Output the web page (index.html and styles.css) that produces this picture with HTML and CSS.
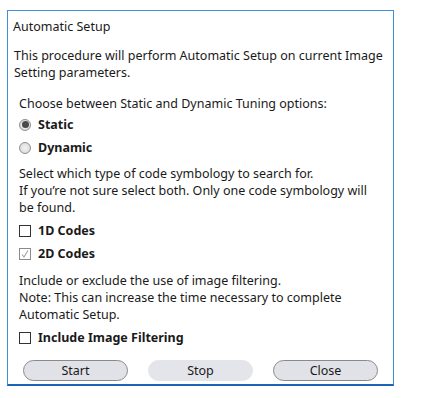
FILE: index.html
```html
<!DOCTYPE html>
<html lang="en">

<head>
    <meta charset="UTF-8">
    <title>Automatic Setup</title>
    <link rel="stylesheet" href="styles.css">
</head>

<body>

    <div class="dialog">

        <div class="title">Automatic Setup</div>

        <p class="intro">This procedure will perform Automatic Setup on current Image Setting parameters.</p>

        <div class="group">
            <p>Choose between Static and Dynamic Tuning options:</p>
            <label class="option"><span class="radio checked"></span>Static</label>
            <label class="option"><span class="radio"></span>Dynamic</label>
        </div>

        <div class="group codes">
            <p>Select which type of code symbology to search for.<br>If you’re not sure select both. Only one code symbology will be found.</p>
            <label class="option"><span class="check"></span>1D Codes</label>
            <label class="option"><span class="check checked">
                <svg width="10" height="10" viewBox="0 0 10 10"><path d="M2 5.5 L4 8 L8 1.5" fill="none" stroke="#a5a5a5" stroke-width="1.1"/></svg>
            </span>2D Codes</label>
        </div>

        <div class="group filter">
            <p>Include or exclude the use of image filtering.<br>Note: This can increase the time necessary to complete Automatic Setup.</p>
            <label class="option"><span class="check"></span>Include Image Filtering</label>
        </div>

        <div class="buttons">
            <button class="btn">Start</button>
            <button class="btn disabled">Stop</button>
            <button class="btn">Close</button>
        </div>

    </div>

</body>

</html>
```

FILE: styles.css
```css
body {
    margin: 0;
    background: white;
    font-family: "Noto Sans", "Open Sans", sans-serif;
    font-size: 12.5px;
    color: #1a1a1a;
}

p {
    margin: 0;
}

.dialog {
    box-sizing: border-box;
    width: 387px;
    height: 376px;
    margin: 10px 0 0 7px;
    padding: 7px 2px 0 5px;
    border: 1px solid #3f8fdb;
    border-bottom: 2px solid #1c64b4;
    line-height: 17px;
}

.title {
    margin-bottom: 13px;
}

.intro {
    padding-left: 1px;
    margin-top: -1px;
    margin-bottom: 14px;
}

.group {
    padding-left: 6px;
    margin-bottom: 6px;
}

.group p {
    padding-right: 8px;
    margin-bottom: 1px;
}

.codes {
    margin-bottom: 7px;
}

.codes p,
.filter p {
    margin-bottom: 3px;
}

.option {
    display: flex;
    align-items: center;
    gap: 7px;
    font-weight: bold;
    height: 23px;
}

.radio {
    width: 12px;
    height: 12px;
    border-radius: 50%;
    border: 1px solid #8e8e8e;
    background: radial-gradient(circle, #f2f2f2 0, #d6d6d6 100%);
    box-sizing: border-box;
    display: flex;
    align-items: center;
    justify-content: center;
}

.radio.checked::after {
    content: "";
    width: 7px;
    height: 7px;
    border-radius: 50%;
    background: #4a4a4a;
}

.check {
    width: 12px;
    height: 12px;
    border: 1px solid #333;
    box-sizing: border-box;
    background: white;
    display: flex;
    align-items: center;
    justify-content: center;
}

.check.checked {
    border-color: #8a8a8a;
}

.check svg {
    display: block;
}

.buttons {
    display: flex;
    gap: 20px;
    margin-top: 11px;
    padding-left: 10px;
}

.btn {
    width: 105px;
    height: 21px;
    border: 1px solid #8a8a8a;
    border-radius: 11px;
    background: #e1e2e8;
    font-family: inherit;
    font-size: 12.5px;
    color: #1a1a1a;
    padding: 0;
}

.btn.disabled {
    border-color: #e4e5ea;
    background: #e4e5ea;
}
```
